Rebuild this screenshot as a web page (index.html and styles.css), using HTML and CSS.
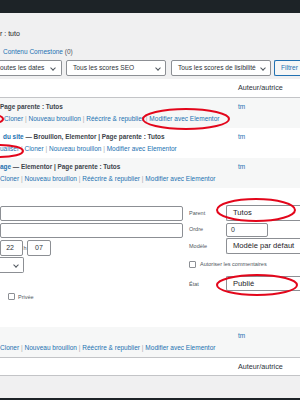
FILE: index.html
```html
<!DOCTYPE html>
<html lang="fr">
<head>
    <meta charset="UTF-8">
    <title>Pages</title>
    <link rel="stylesheet" href="styles.css">
</head>
<body>
    <div class="adminbar"></div>
    <div class="subtitle">r : tuto</div>
    <ul class="views">
        <li><a href="#">Contenu Cornestone</a> <span class="count">(0)</span></li>
    </ul>
    <div class="tablenav">
        <div class="select sel-dates">outes les dates<span class="chev"></span></div>
        <div class="select sel-seo">Tous les scores SEO<span class="chev"></span></div>
        <div class="select sel-read">Tous les scores de lisibilité<span class="chev"></span></div>
        <div class="btn">Filtrer</div>
    </div>

    <div class="posts">
        <div class="thead">
            <div></div>
            <div class="col-author">Auteur/autrice</div>
        </div>

        <div class="row alt">
            <div class="col-title">
                <div class="title-line">Page parente : Tutos</div>
                <div class="actions pad4"><a href="#">Cloner</a> <span class="sep">|</span> <a href="#">Nouveau brouillon</a> <span class="sep">|</span> <a href="#">Réécrire &amp; republier</a> <span class="sep">|</span> <a href="#">Modifier avec Elementor</a></div>
            </div>
            <div class="col-author"><a href="#">tm</a></div>
        </div>

        <div class="row">
            <div class="col-title">
                <div class="title-line pad3"><a href="#">du site</a> — Brouillon, Elementor | Page parente : Tutos</div>
                <div class="actions"><a href="#">ualiser</a> <span class="sep">|</span> <a href="#">Cloner</a> <span class="sep">|</span> <a href="#">Nouveau brouillon</a> <span class="sep">|</span> <a href="#">Modifier avec Elementor</a></div>
            </div>
            <div class="col-author"><a href="#">tm</a></div>
        </div>

        <div class="row alt">
            <div class="col-title">
                <div class="title-line"><a href="#">age</a> — Elementor | Page parente : Tutos</div>
                <div class="actions"><a href="#">Cloner</a> <span class="sep">|</span> <a href="#">Nouveau brouillon</a> <span class="sep">|</span> <a href="#">Réécrire &amp; republier</a> <span class="sep">|</span> <a href="#">Modifier avec Elementor</a></div>
            </div>
            <div class="col-author"><a href="#">tm</a></div>
        </div>

        <div class="quick">
            <div class="qe-left">
                <div class="field open-left"></div>
                <div class="field open-left gap2"></div>
                <div class="date-row">
                    <div class="field open-left hour">22</div>
                    <span class="h">h</span>
                    <div class="field minute">07</div>
                </div>
                <div class="select open-left small-sel">&nbsp;<span class="chev"></span></div>
                <label class="check-row privee"><span class="box"></span>Privée</label>
            </div>
            <div class="qe-right">
                <span class="lbl">Parent</span>
                <div class="select big">Tutos<span class="chev"></span></div>
                <span class="lbl">Ordre</span>
                <div class="field order">0</div>
                <span class="lbl">Modèle</span>
                <div class="select big model-sel">Modèle par défaut<span class="chev"></span></div>
                <label class="check-row comments"><span class="box"></span>Autoriser les commentaires</label>
                <span class="lbl etat">État</span>
                <div class="select big etat-sel">Publié<span class="chev"></span></div>
            </div>
        </div>

        <div class="row alt">
            <div class="col-title">
                <div class="title-line"></div>
                <div class="actions"><a href="#">Cloner</a> <span class="sep">|</span> <a href="#">Nouveau brouillon</a> <span class="sep">|</span> <a href="#">Réécrire &amp; republier</a> <span class="sep">|</span> <a href="#">Modifier avec Elementor</a></div>
            </div>
            <div class="col-author"><a href="#">tm</a></div>
        </div>

        <div class="tfoot">
            <div></div>
            <div class="col-author">Auteur/autrice</div>
        </div>
    </div>
    <div class="spacer"></div>
    <div class="bottombar"></div>

    <!-- red marks drawn over the screenshot -->
    <svg class="marks" width="300" height="400" viewBox="0 0 300 400">
        <g fill="none" stroke="#e3061b" stroke-width="2">
            <ellipse cx="186" cy="119" rx="43" ry="10"/>
            <ellipse cx="-20" cy="119" rx="23" ry="6"/>
            <ellipse cx="0" cy="151" rx="23" ry="6"/>
            <ellipse cx="256" cy="210" rx="39" ry="11"/>
            <ellipse cx="257" cy="285" rx="40" ry="10"/>
        </g>
    </svg>
</body>
</html>
```

FILE: styles.css
```css
body {
    margin: 0;
    width: 300px;
    height: 400px;
    overflow: hidden;
    position: relative;
    background: #f0f0f1;
    font-family: "Liberation Sans", Arial, sans-serif;
    color: #3c434a;
}
a {
    color: #2271b1;
    text-decoration: none;
}
.adminbar {
    height: 13px;
    background: #1d2327;
}
.subtitle {
    margin-top: 15px;
    font-size: 7px;
    line-height: 12px;
    color: #1d2327;
}
.views {
    margin: 6px 0 0;
    padding: 0 0 0 3px;
    list-style: none;
    font-size: 6.5px;
    line-height: 12px;
}
.views .count {
    color: #50575e;
}
.tablenav {
    display: flex;
    margin-top: 2px;
    height: 16px;
}
.tablenav > div {
    flex: none;
}
.select {
    position: relative;
    box-sizing: border-box;
    height: 16px;
    background: #fff;
    border: 1px solid #8c8f94;
    border-radius: 2px;
    font-size: 6.6px;
    line-height: 14px;
    color: #2c3338;
    padding-left: 6px;
    white-space: nowrap;
    overflow: hidden;
}
.chev {
    position: absolute;
    right: 5px;
    top: 5px;
    width: 3px;
    height: 3px;
    border-right: 1px solid #50575e;
    border-bottom: 1px solid #50575e;
    transform: rotate(45deg);
}
/* boxes cut by the left edge of the frame */
.open-left,
.sel-dates {
    border-left: none;
    border-top-left-radius: 0;
    border-bottom-left-radius: 0;
}
.sel-dates {
    width: 62px;
    padding-left: 0;
}
.sel-dates .chev {
    right: 6px;
}
.sel-seo {
    width: 100px;
    margin-left: 4px;
}
.sel-read {
    width: 100px;
    margin-left: 5px;
}
.btn {
    box-sizing: border-box;
    width: 26px;
    height: 16px;
    margin-left: 3px;
    padding-left: 6px;
    border: 1px solid #2271b1;
    border-right: none;
    border-radius: 2px 0 0 2px;
    background: #f6f7f7;
    color: #2271b1;
    font-size: 6.6px;
    line-height: 14px;
    white-space: nowrap;
    overflow: hidden;
}

.posts {
    margin-top: 3px;
}
.thead,
.tfoot {
    display: grid;
    grid-template-columns: 233px 1fr;
    align-items: center;
    height: 18px;
    background: #fff;
    border-bottom: 1px solid #c3c4c7;
    font-size: 7.2px;
    color: #2c3338;
}
.tfoot {
    height: 17px;
    border-top: 1px solid #c3c4c7;
}
.row {
    display: grid;
    grid-template-columns: 233px 1fr;
    box-sizing: border-box;
    height: 30px;
    padding-top: 4px;
    background: #fff;
}
.row.alt {
    background: #f6f7f7;
}
.col-author {
    padding-left: 5px;
    font-size: 6.5px;
    line-height: 10px;
}
.thead .col-author,
.tfoot .col-author {
    font-size: 7.2px;
}
.title-line {
    height: 10px;
    font-size: 6.4px;
    font-weight: bold;
    line-height: 10px;
    color: #3c434a;
    white-space: nowrap;
}
.actions {
    margin-top: 2px;
    font-size: 6.5px;
    line-height: 10px;
    white-space: nowrap;
}
.actions .sep {
    color: #a7aaad;
}
.pad3 {
    padding-left: 3px;
}
.pad4 {
    padding-left: 4px;
}

.quick {
    display: flex;
    height: 139px;
    background: #fff;
}
.qe-left {
    flex: none;
    width: 183px;
    padding-top: 18px;
}
.field {
    box-sizing: border-box;
    height: 15px;
    background: #fff;
    border: 1px solid #8c8f94;
    border-radius: 2px;
    font-size: 7px;
    line-height: 13px;
    color: #2c3338;
}
.gap2 {
    margin-top: 2px;
}
.date-row {
    display: flex;
    align-items: center;
    margin-top: 2px;
    height: 16px;
}
.date-row .field {
    height: 16px;
    line-height: 14px;
}
.hour {
    width: 23px;
    text-align: right;
    padding-right: 8px;
}
.h {
    width: 4px;
    text-align: center;
    font-size: 5.5px;
    color: #50575e;
}
.minute {
    width: 24px;
    text-align: center;
}
.small-sel {
    width: 24px;
    margin-top: 1px;
}
.check-row {
    display: flex;
    align-items: center;
    font-size: 5.5px;
    color: #50575e;
}
.box {
    box-sizing: border-box;
    width: 7px;
    height: 7px;
    margin-right: 3px;
    background: #fff;
    border: 1px solid #8c8f94;
    border-radius: 1px;
}
.privee {
    margin-top: 20px;
    padding-left: 8px;
    height: 7px;
}

.qe-right {
    flex: none;
    display: grid;
    grid-template-columns: 38px 74px;
    align-content: start;
    margin-left: 5px;
    padding-top: 17px;
}
.lbl {
    align-self: center;
    padding-left: 1px;
    font-size: 5.5px;
    color: #50575e;
}
.select.big {
    font-size: 7.6px;
    padding-left: 6px;
    line-height: 14px;
    color: #1d2327;
    border-right: none;
    border-radius: 2px 0 0 2px;
}
.select.big .chev {
    display: none;
}
.model-sel {
    margin-top: 1px;
}
.order {
    width: 42px;
    height: 14px;
    margin-top: 2px;
    padding-left: 4px;
    line-height: 12px;
}
.comments {
    grid-column: 1 / 3;
    margin-top: 6px;
    padding-left: 1px;
    height: 8px;
}
.comments .box {
    margin-right: 4px;
}
.etat,
.etat-sel {
    margin-top: 8px;
}
.etat-sel {
    height: 15px;
    line-height: 13px;
}

.spacer {
    height: 22px;
}
.bottombar {
    height: 2px;
    background: #1d2327;
}
.marks {
    position: absolute;
    top: 0;
    left: 0;
    overflow: hidden;
    pointer-events: none;
}
```
